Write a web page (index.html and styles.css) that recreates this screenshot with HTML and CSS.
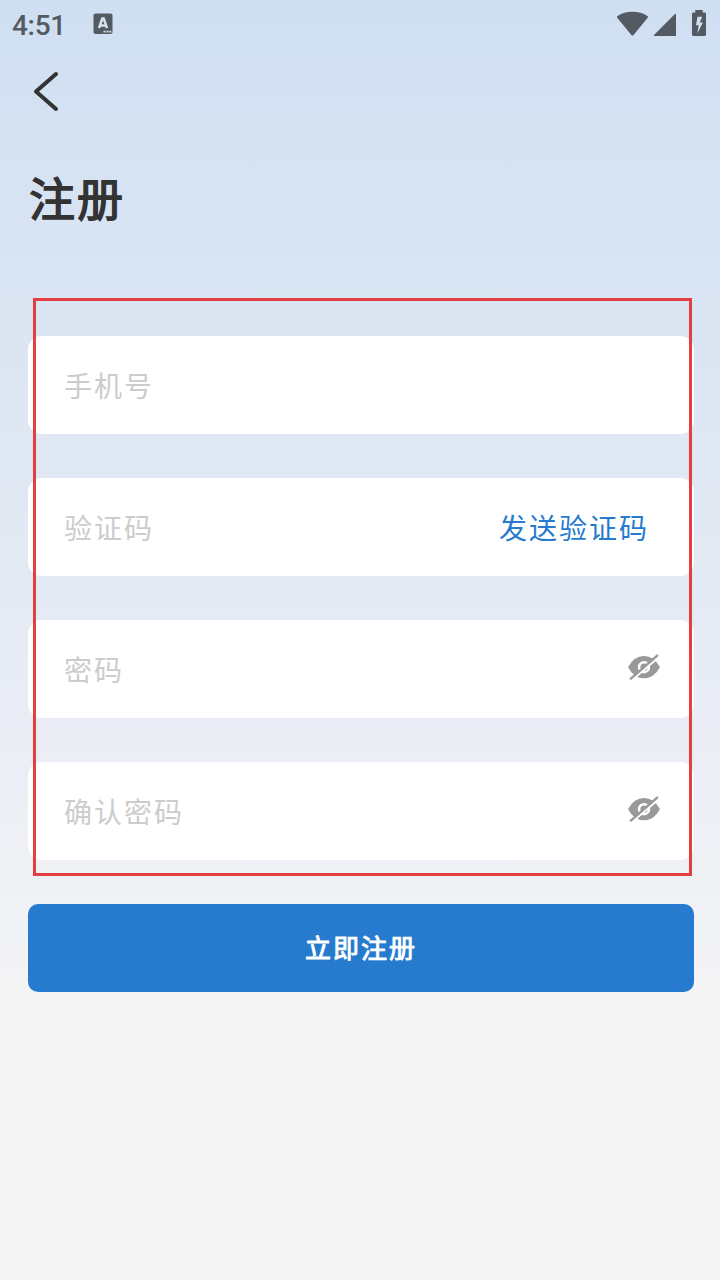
FILE: index.html
```html
<!DOCTYPE html>
<html lang="zh-CN">
<head>
<meta charset="utf-8">
<title>注册</title>
<link rel="stylesheet" href="styles.css">
</head>
<body>
<div class="screen">
  <header class="status">
    <span class="clock">4:51</span>
    <svg class="ime" width="20" height="22" viewBox="0 0 20 22">
      <rect x="0.5" y="0.5" width="19" height="20.5" rx="2" fill="#535a62"/>
      <path d="M6 15.2 9.3 5.6h1.4L14 15.2M7.3 12.4h5.4" fill="none" stroke="#d5e2f2" stroke-width="2.5"/>
      <path d="M10.5 18.7h2M13.5 18.7h2M16.3 18.7h2" stroke="#d5e2f2" stroke-width="1.8"/>
    </svg>
    <svg class="signals" width="92" height="28" viewBox="616 9 92 28" fill="#535a62">
      <path d="M617 17.4Q616.6 16.6 617.6 16Q624 11.8 632.5 11.8T647.4 16Q648.4 16.6 647.9 17.5L633.6 35Q632.5 36.2 631.4 35Z"/>
      <path d="M676 15.2V36H655.2Q653 36 654.5 34.4L674.4 14.4Q676 13 676 15.2Z"/>
      <path fill-rule="evenodd" d="M695.3 12.6V10H702.7V12.6H704.6Q706 12.6 706 14V34.6Q706 36 704.6 36H693.4Q692 36 692 34.6V14Q692 12.6 693.4 12.6ZM697.5 16.8 696 25.2H698.7L697.3 33.6 702.9 22.4H699.7L702.2 16.8Z"/>
    </svg>
  </header>
  <nav class="nav">
    <svg width="28" height="42" viewBox="32 70 28 42">
      <path d="M56 74 36 91.5 56 109" fill="none" stroke="#333" stroke-width="4" stroke-linecap="round" stroke-linejoin="round"/>
    </svg>
  </nav>
  <h1 class="title">注册</h1>
  <main class="form">
    <div class="field"><span class="hint">手机号</span></div>
    <div class="field"><span class="hint">验证码</span><span class="send">发送验证码</span></div>
    <div class="field"><span class="hint">密码</span>
      <svg class="eye" width="32" height="28" viewBox="0 0 32 28">
        <path d="M0 14.2Q6 3 16 3T32 14.2Q26 25.2 16 25.2T0 14.2Z" fill="#999"/>
        <circle cx="16" cy="14.2" r="4.9" fill="none" stroke="#fff" stroke-width="2.6"/>
        <path d="M15.8 13.6H18" stroke="#999" stroke-width="3"/>
        <path d="M3 28 31 4" stroke="#fff" stroke-width="2"/>
        <path d="M2.8 25.6 29.2 2.6" stroke="#999" stroke-width="2.4" stroke-linecap="round"/>
      </svg>
    </div>
    <div class="field"><span class="hint">确认密码</span>
      <svg class="eye" width="32" height="28" viewBox="0 0 32 28">
        <path d="M0 14.2Q6 3 16 3T32 14.2Q26 25.2 16 25.2T0 14.2Z" fill="#999"/>
        <circle cx="16" cy="14.2" r="4.9" fill="none" stroke="#fff" stroke-width="2.6"/>
        <path d="M15.8 13.6H18" stroke="#999" stroke-width="3"/>
        <path d="M3 28 31 4" stroke="#fff" stroke-width="2"/>
        <path d="M2.8 25.6 29.2 2.6" stroke="#999" stroke-width="2.4" stroke-linecap="round"/>
      </svg>
    </div>
    <div class="highlight"></div>
  </main>
  <button class="submit">立即注册</button>
</div>
</body>
</html>
```

FILE: styles.css
```css
* { box-sizing: border-box; }
body { margin: 0; }
.screen {
  width: 720px;
  height: 1280px;
  overflow: hidden;
  background: linear-gradient(180deg, #cfdff2 0, #d8e4f3 230px, #e0e8f3 480px, #e8ecf5 690px, #f5f5f5 1030px);
  font-family: "Noto Sans CJK SC", sans-serif;
  letter-spacing: 2px;
}
.status {
  display: flex;
  align-items: flex-start;
  height: 50px;
  padding: 9px 12px 0;
}
.clock {
  width: 81px;
  margin-top: 1px;
  font: 500 28px/32px Roboto, sans-serif;
  letter-spacing: -0.3px;
  color: #535a62;
}
.ime { margin-top: 4px; }
.signals { margin-left: auto; }
.nav { height: 92px; padding: 20px 32px 0; }
.nav svg { display: block; }
.title {
  margin: 0;
  padding: 21px 29px 0;
  height: 194px;
  font-size: 46px;
  line-height: 66px;
  font-weight: 400;
  -webkit-text-stroke: 1.5px #333;
  color: #333;
}
.form {
  position: relative;
  display: grid;
  gap: 44px;
  margin: 0 26px 0 28px;
}
.field {
  display: flex;
  align-items: center;
  height: 98px;
  padding: 0 34px 0 36px;
  background: #fff;
  border-radius: 14px;
  font-size: 28px;
  line-height: 40px;
}
.hint { color: #ccc; }
.send { margin-left: auto; margin-right: 11px; color: #267bce; }
.eye { margin-left: auto; margin-bottom: 4px; }
.highlight {
  position: absolute;
  left: 5px;
  top: -38px;
  width: 659px;
  height: 578px;
  border: 3px solid #e53e40;
}
.submit {
  display: block;
  width: 666px;
  height: 88px;
  margin: 44px 26px 0 28px;
  padding: 0 0 2px;
  border: 0;
  border-radius: 10px;
  background: #267bce;
  color: #fff;
  font: 400 26px/38px "Noto Sans CJK SC", sans-serif;
  -webkit-text-stroke: 0.9px #fff;
  letter-spacing: 2px;
}
```
